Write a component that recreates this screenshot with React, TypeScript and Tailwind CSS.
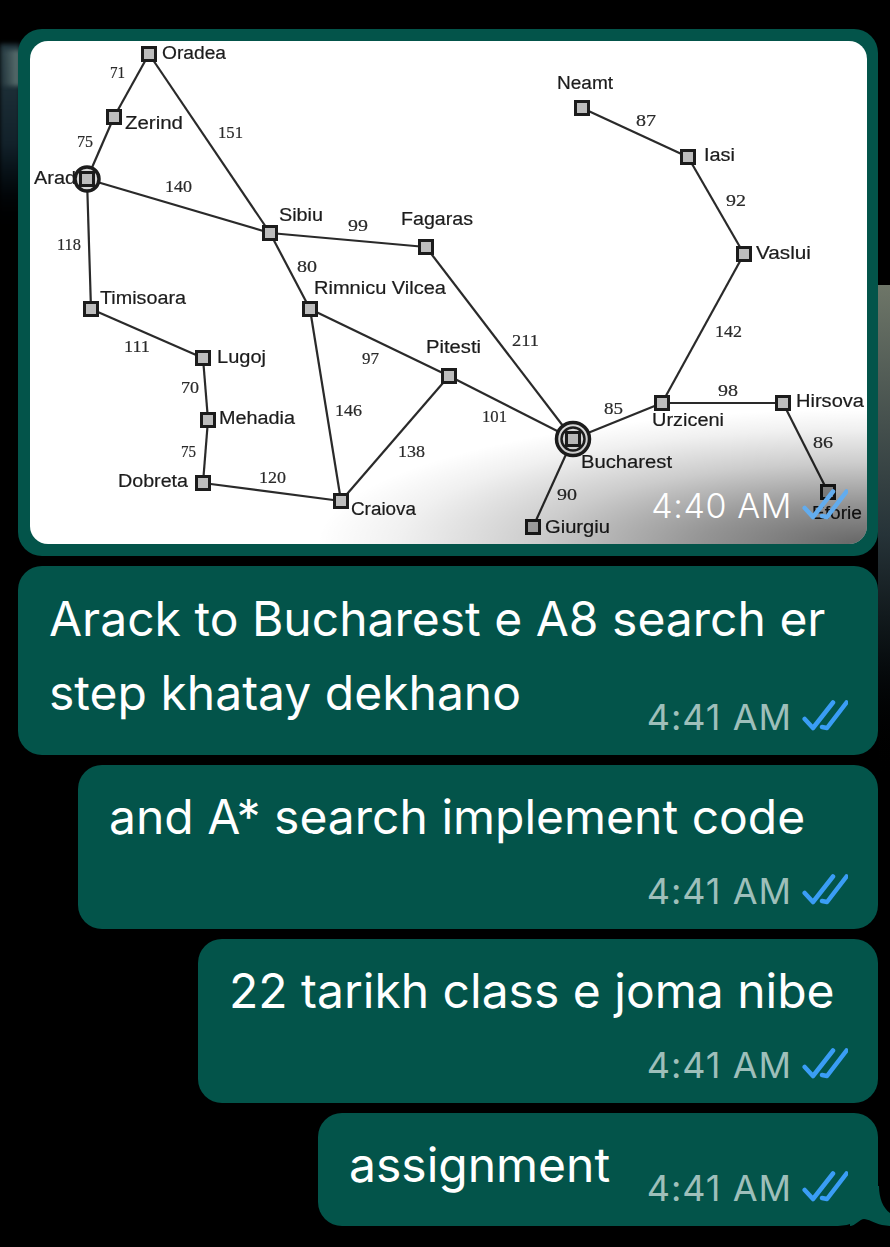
const FONT_SANS = '"Liberation Sans", Arial, sans-serif';
const FONT_SERIF = '"Liberation Serif", "Times New Roman", serif';

const CITIES = {
  oradea: [149, 54],
  zerind: [114, 117],
  arad: [87, 179],
  sibiu: [270, 233],
  fagaras: [426, 247],
  rimnicu: [310, 309],
  timisoara: [91, 309],
  lugoj: [203, 358],
  mehadia: [208, 420],
  dobreta: [203, 483],
  craiova: [341, 501],
  pitesti: [449, 376],
  bucharest: [573, 439],
  giurgiu: [533, 527],
  urziceni: [662, 403],
  hirsova: [783, 403],
  eforie: [828, 492],
  neamt: [582, 108],
  iasi: [688, 157],
  vaslui: [744, 254],
} as const;

type City = keyof typeof CITIES;

const ROADS: [City, City][] = [
  ['oradea', 'zerind'],
  ['oradea', 'sibiu'],
  ['zerind', 'arad'],
  ['arad', 'sibiu'],
  ['arad', 'timisoara'],
  ['timisoara', 'lugoj'],
  ['lugoj', 'mehadia'],
  ['mehadia', 'dobreta'],
  ['dobreta', 'craiova'],
  ['craiova', 'rimnicu'],
  ['craiova', 'pitesti'],
  ['rimnicu', 'sibiu'],
  ['rimnicu', 'pitesti'],
  ['sibiu', 'fagaras'],
  ['fagaras', 'bucharest'],
  ['pitesti', 'bucharest'],
  ['bucharest', 'urziceni'],
  ['bucharest', 'giurgiu'],
  ['urziceni', 'vaslui'],
  ['urziceni', 'hirsova'],
  ['hirsova', 'eforie'],
  ['vaslui', 'iasi'],
  ['iasi', 'neamt'],
];

// text, left x, baseline y, width
const NAMES: [string, number, number, number][] = [
  ['Oradea', 162, 59, 64],
  ['Zerind', 125, 129, 58],
  ['Arad', 34, 184, 42],
  ['Sibiu', 279, 221, 44],
  ['Fagaras', 401, 225, 72],
  ['Rimnicu Vilcea', 314, 294, 132],
  ['Timisoara', 100, 304, 86],
  ['Lugoj', 217, 363, 49],
  ['Mehadia', 219, 424, 76],
  ['Dobreta', 118, 487, 70],
  ['Craiova', 351, 515, 65],
  ['Pitesti', 426, 353, 55],
  ['Bucharest', 581, 468, 91],
  ['Urziceni', 652, 426, 72],
  ['Hirsova', 796, 407, 68],
  ['Giurgiu', 545, 533, 65],
  ['Eforie', 812, 519, 50],
  ['Neamt', 557, 89, 56],
  ['Iasi', 704, 161, 31],
  ['Vaslui', 756, 259, 55],
];

const COSTS: [string, number, number, number][] = [
  ['71', 110, 78, 15],
  ['151', 218, 138, 25],
  ['75', 77, 147, 16],
  ['140', 165, 192, 27],
  ['118', 57, 250, 24],
  ['99', 348, 231, 20],
  ['80', 297, 272, 20],
  ['87', 636, 126, 20],
  ['92', 726, 206, 20],
  ['111', 124, 352, 26],
  ['70', 181, 393, 18],
  ['75', 181, 457, 15],
  ['120', 259, 483, 27],
  ['97', 362, 364, 17],
  ['146', 335, 416, 27],
  ['138', 398, 457, 27],
  ['101', 482, 422, 25],
  ['211', 512, 346, 27],
  ['85', 604, 414, 19],
  ['142', 715, 337, 27],
  ['98', 718, 396, 20],
  ['86', 813, 448, 20],
  ['90', 557, 500, 20],
];

function RomaniaMap() {
  return (
    <svg viewBox="30 41 837 503" className="block h-[503px] w-[837px] blur-[0.6px]">
      <rect x="30" y="41" width="837" height="503" fill="#fff" />
      <g stroke="#2a2a2a" strokeWidth="2.2">
        {ROADS.map(([a, b]) => (
          <line key={a + b} x1={CITIES[a][0]} y1={CITIES[a][1]} x2={CITIES[b][0]} y2={CITIES[b][1]} />
        ))}
      </g>
      <g fontFamily={FONT_SANS} fontSize="18" fill="#1c1c1c" stroke="#1c1c1c" strokeWidth="0.2">
        {NAMES.map(([text, x, y, width]) => (
          <text key={text} x={x} y={y} textLength={width} lengthAdjust="spacingAndGlyphs">
            {text}
          </text>
        ))}
      </g>
      <g fontFamily={FONT_SERIF} fontSize="17" fill="#2a2a2a" stroke="#2a2a2a" strokeWidth="0.2">
        {COSTS.map(([text, x, y, width]) => (
          <text key={text + x} x={x} y={y} textLength={width} lengthAdjust="spacingAndGlyphs">
            {text}
          </text>
        ))}
      </g>
      <g fill="#d8d8d8" stroke="#1c1c1c">
        <circle cx="87" cy="179" r="12" strokeWidth="3.5" />
        <circle cx="573" cy="439" r="16.5" strokeWidth="3.5" />
        <circle cx="573" cy="439" r="11.5" strokeWidth="2.5" />
      </g>
      <g fill="#bdbdbd" stroke="#1c1c1c" strokeWidth="3">
        {Object.entries(CITIES).map(([name, [x, y]]) => (
          <rect key={name} x={x - 6.5} y={y - 6.5} width="13" height="13" />
        ))}
      </g>
    </svg>
  );
}

function DoubleCheck({ color }: { color: string }) {
  return (
    <svg viewBox="0 0 46 34" className="h-[34px] w-[46px]" fill="none" stroke={color} strokeWidth="4.5" strokeLinecap="round" strokeLinejoin="round">
      <path d="M2.7 19 L11 28 L31 2.5" />
      <path d="M20 27 L25 28 L44.5 2.5" />
    </svg>
  );
}

function Meta({ time, light = false }: { time: string; light?: boolean }) {
  return (
    <div className="flex items-center gap-[10px]">
      <span
        className={
          light
            ? 'text-[34px] leading-10 font-light tracking-[0.6px] text-white'
            : 'text-[36px] leading-10 tracking-[1px] text-[#9ebfba]'
        }
      >
        {time}
      </span>
      <DoubleCheck color={light ? '#62acee' : '#3a9df5'} />
    </div>
  );
}

export default function App() {
  return (
    <div
      className="relative flex h-[1247px] w-[890px] flex-col items-end gap-[10px] overflow-hidden bg-black pt-[29px] pr-[12px] text-[48px] leading-[74px] text-white"
      style={{ fontFamily: 'Inter, "Noto Sans", sans-serif' }}
    >
      {/* wallpaper showing at the edges */}
      <div className="absolute top-[44px] left-0 h-[200px] w-[20px] bg-gradient-to-b from-[#243840] via-[#12212a] to-black blur-[2px]" />
      <div className="absolute top-[50px] left-0 h-[36px] w-[20px] bg-gradient-to-r from-transparent to-[#5f7573] blur-[2px]" />
      <div className="absolute top-[285px] right-0 h-[500px] w-[12px] bg-gradient-to-b from-[#6e7668] via-[#263338] to-black" />

      <div className="relative w-[860px] rounded-[24px] bg-[#03544a] p-[12px]">
        <div className="relative h-[503px] w-[837px] overflow-hidden rounded-[18px]">
          <RomaniaMap />
          <div className="absolute inset-0 bg-[radial-gradient(ellipse_550px_135px_at_100%_100%,rgba(0,0,0,0.6),rgba(0,0,0,0.42)_30%,rgba(0,0,0,0.2)_60%,rgba(0,0,0,0.06)_85%,rgba(0,0,0,0)_100%)]" />
          <div className="absolute right-[19px] bottom-[18px]">
            <Meta time="4:40 AM" light />
          </div>
        </div>
      </div>

      <div className="flex h-[189px] w-[860px] flex-col rounded-[24px] bg-[#03544a] pt-[16px] pr-[30px] pb-[18px] pl-[31px]">
        <div>Arack to Bucharest e A8 search er</div>
        <div className="flex flex-1 justify-between">
          <span>step khatay dekhano</span>
          <div className="self-end">
            <Meta time="4:41 AM" />
          </div>
        </div>
      </div>

      <div className="flex h-[164px] w-[800px] flex-col justify-between rounded-[24px] bg-[#03544a] pt-[15px] pr-[30px] pb-[18px] pl-[31px]">
        <div>and A* search implement code</div>
        <div className="self-end">
          <Meta time="4:41 AM" />
        </div>
      </div>

      <div className="flex h-[164px] w-[680px] flex-col justify-between rounded-[24px] bg-[#03544a] pt-[15px] pr-[30px] pb-[18px] pl-[31px]">
        <div>22 tarikh class e joma nibe</div>
        <div className="self-end">
          <Meta time="4:41 AM" />
        </div>
      </div>

      <div className="relative flex h-[113px] w-[560px] justify-between rounded-[24px] rounded-br-[40px] bg-[#03544a] pt-[15px] pr-[30px] pb-[18px] pl-[31px]">
        <span>assignment</span>
        <div className="self-end">
          <Meta time="4:41 AM" />
        </div>
        {/* bubble tail */}
        <svg viewBox="0 0 40 40" className="absolute right-[-12px] bottom-0 h-[40px] w-[40px]" fill="#03544a">
          <path d="M29 0 C29 12 33 22 40 27 L40 40 L32 39 C24 37 18 33 14 33 C10 33 5 40 0 40 L0 0 Z" />
        </svg>
      </div>
    </div>
  );
}
